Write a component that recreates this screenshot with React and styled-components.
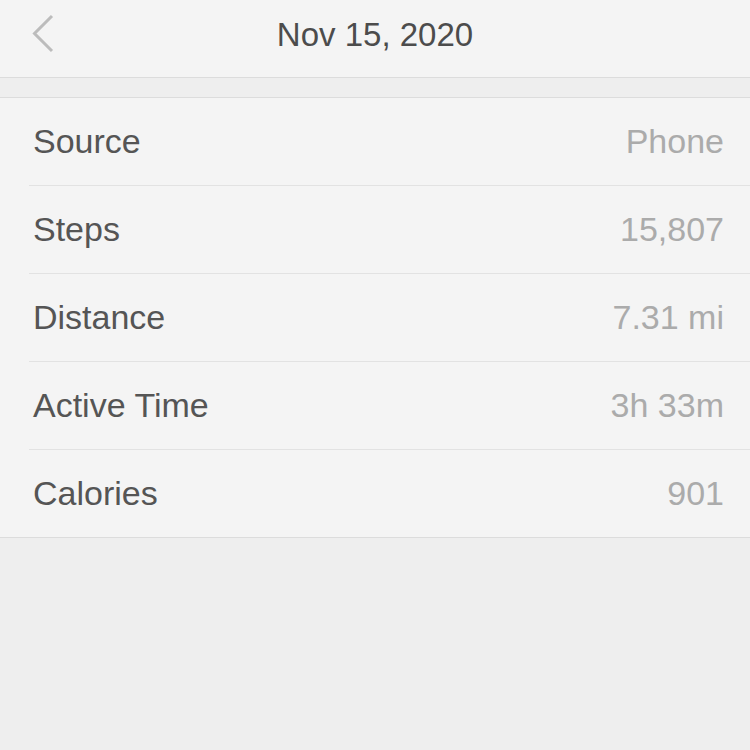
import styled, { createGlobalStyle } from "styled-components"

const GlobalStyle = createGlobalStyle`
    html, body {
        margin: 0;
        padding: 0;
        background: #eeeeee;
        font-family: "Liberation Sans", Arial, sans-serif;
    }
`;

const Page = styled.div`
    width: 750px;
    height: 750px;
    background: #eeeeee;
    overflow: hidden;
`;

const Header = styled.header`
    position: relative;
    height: 77px;
    display: flex;
    align-items: center;
    justify-content: center;
    background: #f4f4f4;
    border-bottom: 1px solid #dcdcdc;
`;

const Title = styled.h1`
    margin: 0 0 7px;
    font-size: 33px;
    font-weight: normal;
    color: #4c4c4c;
`;

const BackButton = styled.button`
    position: absolute;
    left: 31px;
    top: 14px;
    width: 26px;
    height: 40px;
    padding: 0;
    border: 0;
    background: none;
    display: flex;
    align-items: center;
    justify-content: center;
`;

const Gap = styled.div`
    height: 19px;
`;

const List = styled.ul`
    margin: 0;
    padding: 0 0 0 29px;
    list-style: none;
    background: #f4f4f4;
    border-top: 1px solid #dcdcdc;
    border-bottom: 1px solid #dcdcdc;
`;

const Row = styled.li`
    height: 87px;
    display: flex;
    align-items: center;
    justify-content: space-between;
    padding: 0 26px 0 4px;
    border-bottom: ${({ $last }) => ($last ? "none" : "1px solid #e2e2e2")};
`;

const Label = styled.span`
    font-size: 34px;
    color: #555555;
`;

const Value = styled.span`
    font-size: 34px;
    color: #ababab;
`;

const rows = [
    ["Source", "Phone"],
    ["Steps", "15,807"],
    ["Distance", "7.31 mi"],
    ["Active Time", "3h 33m"],
    ["Calories", "901"],
];

export default function App() {
    return (
        <Page>
            <GlobalStyle />
            <Header>
                <BackButton aria-label="Back">
                    <svg width="26" height="40" viewBox="0 0 26 40">
                        <path d="M21 2 L3.5 19.5 L21 37" fill="none" stroke="#bcbcbc" strokeWidth="3" />
                    </svg>
                </BackButton>
                <Title>Nov 15, 2020</Title>
            </Header>
            <Gap />
            <List>
                {rows.map(([label, value], i) => (
                    <Row key={label} $last={i === rows.length - 1}>
                        <Label>{label}</Label>
                        <Value>{value}</Value>
                    </Row>
                ))}
            </List>
        </Page>
    )
}
